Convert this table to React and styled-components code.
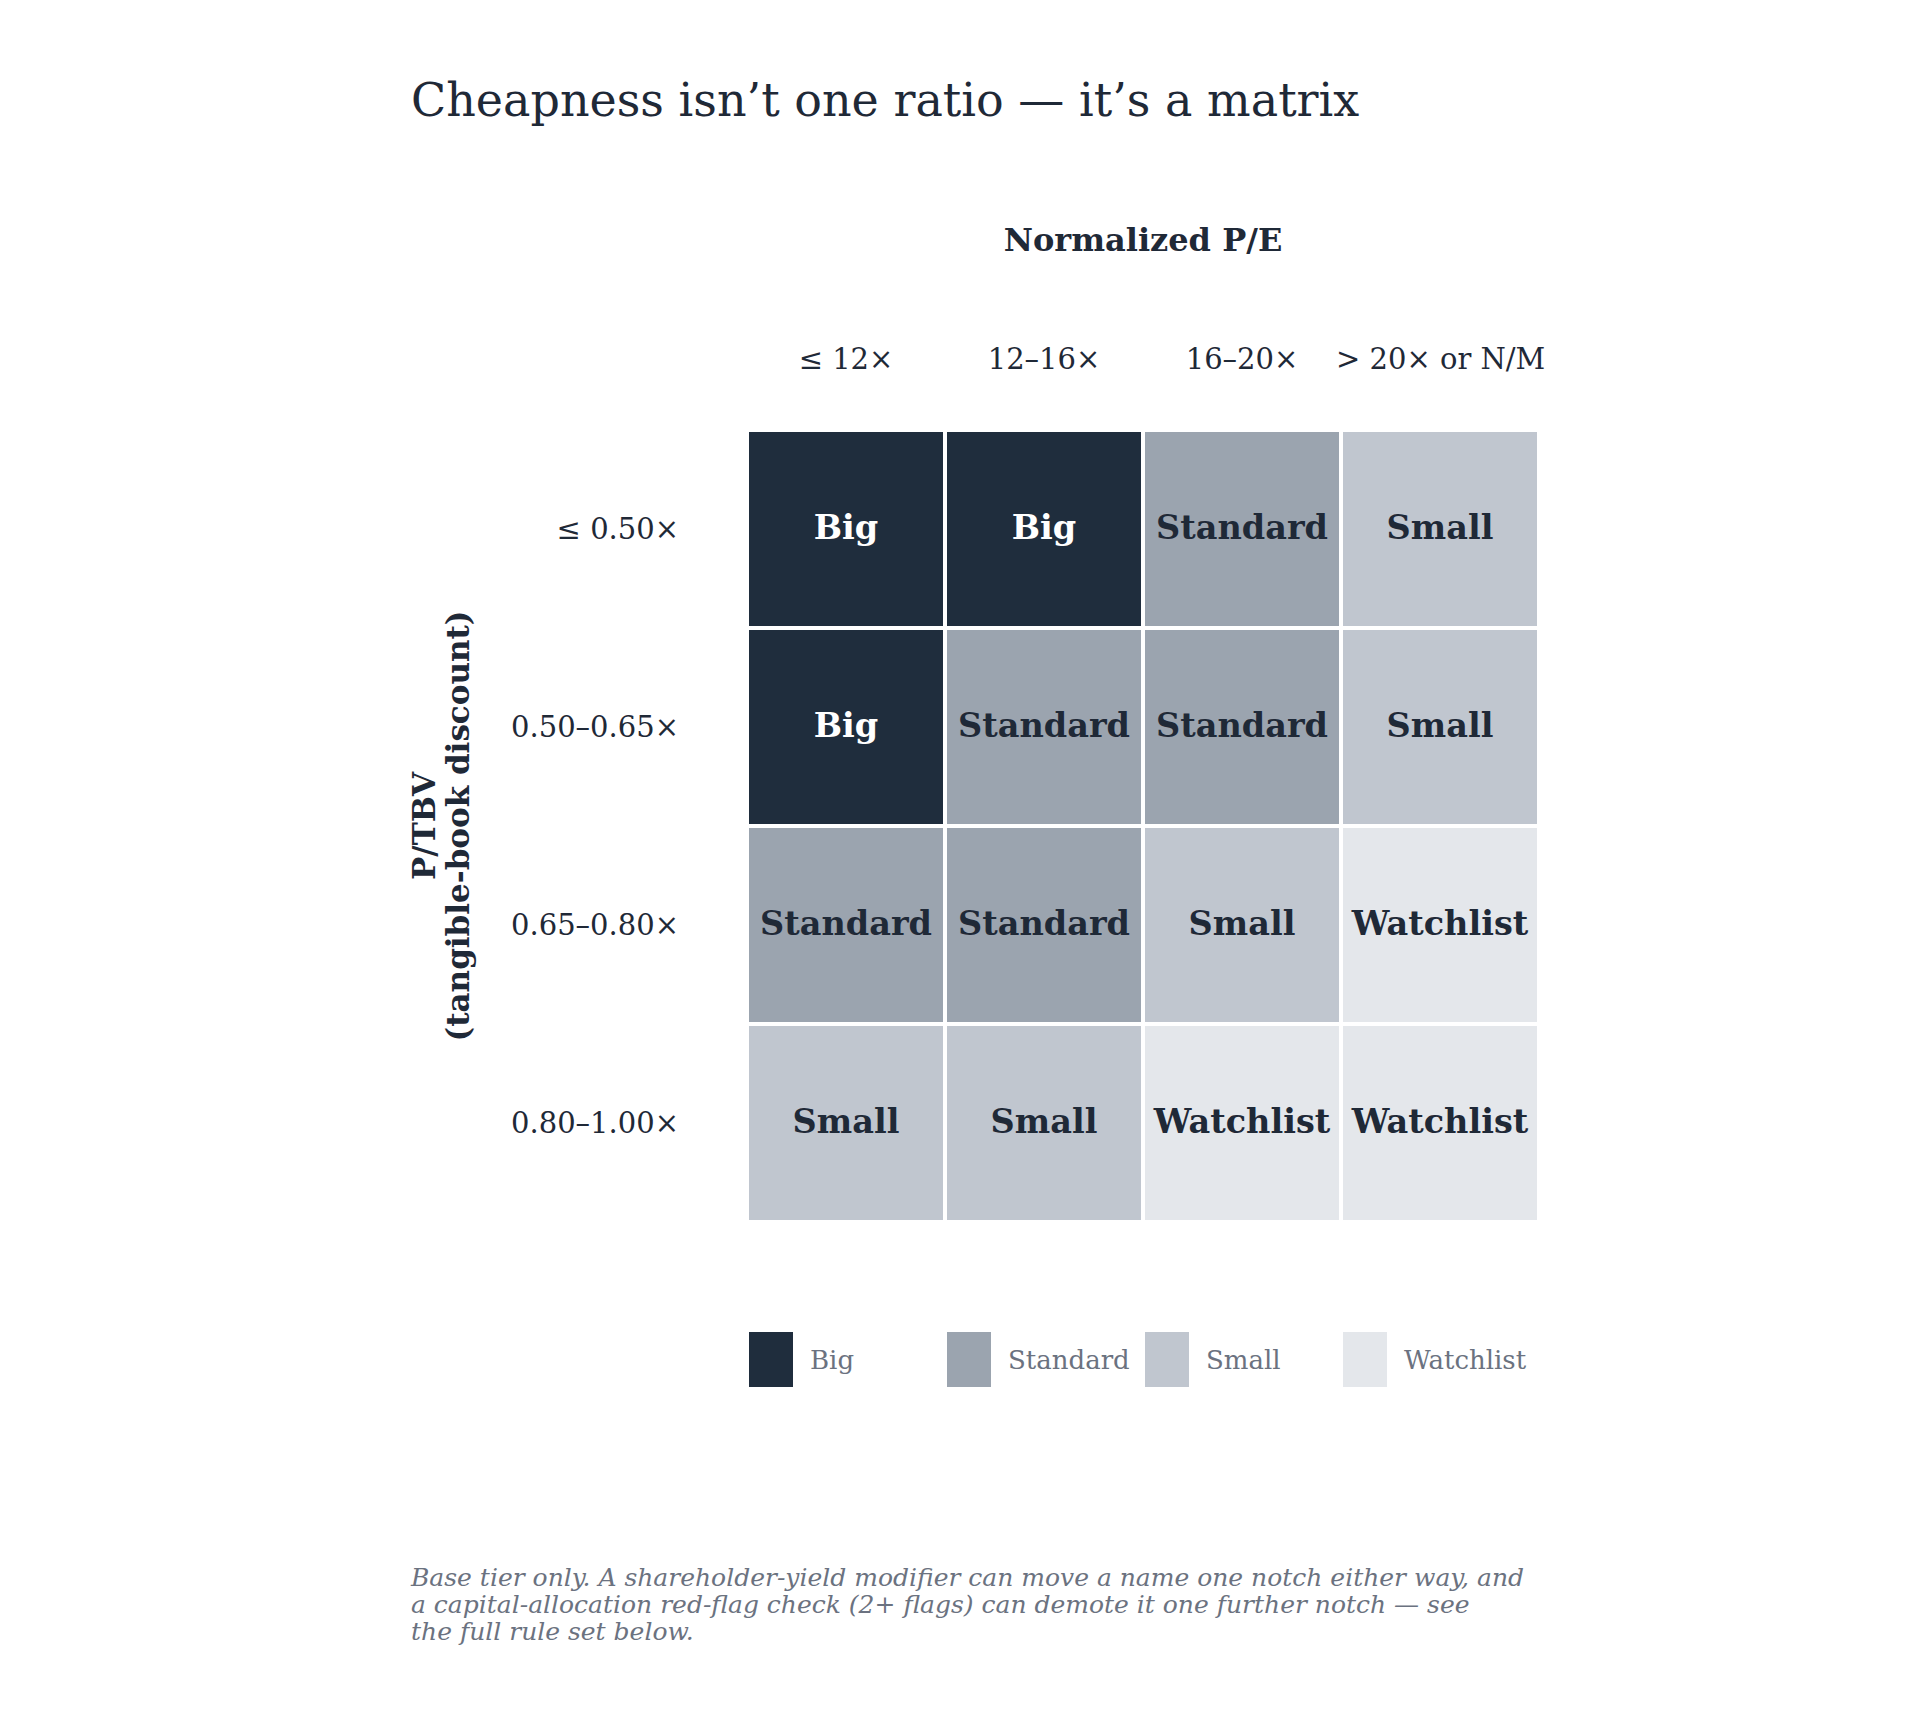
import React from 'react';
import styled, { createGlobalStyle } from 'styled-components';

const GlobalStyle = createGlobalStyle`
  body {
    margin: 0;
    background: #ffffff;
    font-family: "DejaVu Serif", "Liberation Serif", serif;
    color: #1f2937;
  }
`;

const tiers = {
  Big: { bg: '#1f2d3d', fg: '#ffffff' },
  Standard: { bg: '#9ba4af', fg: '#1f2937' },
  Small: { bg: '#c0c6cf', fg: '#1f2937' },
  Watchlist: { bg: '#e4e7eb', fg: '#1f2937' },
};

const columns = [
  { label: '≤ 12×', shift: 0 },
  { label: '12–16×', shift: 0 },
  { label: '16–20×', shift: 0 },
  { label: '> 20× or N/M', shift: -7 },
];

const rows = [
  { label: '≤ 0.50×', cells: ['Big', 'Big', 'Standard', 'Small'] },
  { label: '0.50–0.65×', cells: ['Big', 'Standard', 'Standard', 'Small'] },
  { label: '0.65–0.80×', cells: ['Standard', 'Standard', 'Small', 'Watchlist'] },
  { label: '0.80–1.00×', cells: ['Small', 'Small', 'Watchlist', 'Watchlist'] },
];

const Page = styled.div`
  width: 1920px;
  min-height: 1720px;
  padding: 72px 0 0 411px;
  box-sizing: border-box;
`;

const Title = styled.h1`
  margin: 0;
  font-size: 46px;
  font-weight: normal;
  line-height: 56px;
  color: #1f2937;
  white-space: nowrap;
`;

const AxisTitle = styled.div`
  width: 788px;
  margin: 93px 0 0 338px;
  text-align: center;
  font-size: 32px;
  font-weight: bold;
  line-height: 38px;
  white-space: nowrap;
`;

const HeaderRow = styled.div`
  display: grid;
  grid-template-columns: repeat(4, 194px);
  column-gap: 4px;
  margin: 82px 0 0 338px;
  width: 788px;
`;

const ColHeader = styled.div`
  text-align: center;
  font-size: 29px;
  line-height: 36px;
  white-space: nowrap;
  margin-left: ${(p) => p.$shift}px;
`;

const Body = styled.div`
  display: flex;
  margin-top: 55px;
`;

const YAxis = styled.div`
  width: 60px;
  display: flex;
  align-items: center;
  justify-content: center;
`;

const YLabel = styled.div`
  transform: rotate(-90deg);
  white-space: nowrap;
  text-align: center;
  font-size: 31px;
  font-weight: bold;
  line-height: 34px;
`;

const RowLabels = styled.div`
  width: 208px;
  margin-right: 70px;
  display: grid;
  grid-template-rows: repeat(4, 194px);
  row-gap: 4px;
`;

const RowLabel = styled.div`
  display: flex;
  align-items: center;
  justify-content: flex-end;
  font-size: 29px;
  white-space: nowrap;
`;

const Matrix = styled.div`
  display: grid;
  grid-template-columns: repeat(4, 194px);
  grid-template-rows: repeat(4, 194px);
  gap: 4px;
`;

const Cell = styled.div`
  display: flex;
  align-items: center;
  justify-content: center;
  padding-bottom: 3px;
  box-sizing: border-box;
  background: ${(p) => tiers[p.$tier].bg};
  color: ${(p) => tiers[p.$tier].fg};
  font-size: 33.5px;
  font-weight: bold;
  white-space: nowrap;
`;

const Legend = styled.div`
  display: grid;
  grid-template-columns: repeat(4, 194px);
  column-gap: 4px;
  margin: 112px 0 0 338px;
`;

const LegendItem = styled.div`
  display: flex;
  align-items: center;
  gap: 17px;
`;

const Swatch = styled.div`
  width: 44px;
  height: 55px;
  flex: none;
  background: ${(p) => tiers[p.$tier].bg};
`;

const LegendText = styled.span`
  font-size: 26px;
  color: #6b7280;
  white-space: nowrap;
`;

const Footnote = styled.p`
  margin: 177px 0 0;
  width: 1200px;
  font-size: 25px;
  line-height: 27px;
  font-style: italic;
  color: #6b7280;
  white-space: nowrap;
`;

export default function App() {
  return (
    <>
      <GlobalStyle />
      <Page>
        <Title>Cheapness isn’t one ratio — it’s a matrix</Title>
        <AxisTitle>Normalized P/E</AxisTitle>
        <HeaderRow>
          {columns.map((c) => (
            <ColHeader key={c.label} $shift={c.shift}>
              {c.label}
            </ColHeader>
          ))}
        </HeaderRow>
        <Body>
          <YAxis>
            <YLabel>
              P/TBV
              <br />
              (tangible-book discount)
            </YLabel>
          </YAxis>
          <RowLabels>
            {rows.map((r) => (
              <RowLabel key={r.label}>{r.label}</RowLabel>
            ))}
          </RowLabels>
          <Matrix>
            {rows.map((r, i) =>
              r.cells.map((t, j) => (
                <Cell key={`${i}-${j}`} $tier={t}>
                  {t}
                </Cell>
              ))
            )}
          </Matrix>
        </Body>
        <Legend>
          {Object.keys(tiers).map((t) => (
            <LegendItem key={t}>
              <Swatch $tier={t} />
              <LegendText>{t}</LegendText>
            </LegendItem>
          ))}
        </Legend>
        <Footnote>
          Base tier only. A shareholder-yield modifier can move a name one notch either way, and
          <br />
          a capital-allocation red-flag check (2+ flags) can demote it one further notch — see
          <br />
          the full rule set below.
        </Footnote>
      </Page>
    </>
  );
}
